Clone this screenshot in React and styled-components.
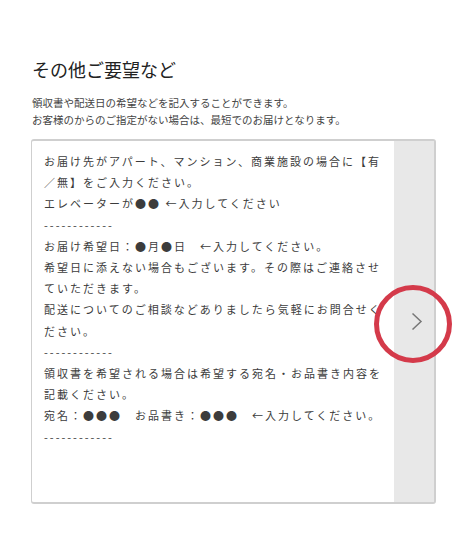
import React from "react";
import styled, { createGlobalStyle } from "styled-components";

const GlobalStyle = createGlobalStyle`
  body {
    margin: 0;
    background: #fff;
    font-family: "Noto Sans CJK JP", "Noto Sans", sans-serif;
  }
`;

const Page = styled.div`
  width: 466px;
  height: 560px;
  box-sizing: border-box;
  padding: 56px 30px 0 31px;
`;

const Title = styled.h2`
  margin: 0 0 0 1px;
  font-size: 18px;
  line-height: 26px;
  font-weight: 400;
  color: #222;
`;

const Lead = styled.p`
  margin: 12px 0 0 1px;
  font-size: 10.5px;
  line-height: 17px;
  color: #444;
`;

const Field = styled.div`
  position: relative;
  margin-top: 11px;
  height: 365px;
  box-sizing: border-box;
  display: flex;
  border: 1px solid #cfcfcf;
  border-top-width: 2px;
  border-right-width: 2px;
  border-bottom-width: 2px;
  border-radius: 3px;
  background: #fff;
`;

const Body = styled.div`
  flex: 1;
  padding: 10px 6px 0 12px;
  font-size: 11px;
  line-height: 21.2px;
  letter-spacing: 2px;
  color: #3c3c3c;
  white-space: pre-wrap;
  word-break: break-all;
`;

const Strip = styled.div`
  position: relative;
  width: 40px;
  background: #e8e8e8;
  display: flex;
  align-items: center;
  justify-content: center;
  padding-left: 6px;
  box-sizing: border-box;
`;

const Ring = styled.div`
  position: absolute;
  left: 50%;
  top: 50%;
  width: 78px;
  height: 78px;
  margin: -37px 0 0 -40px;
  box-sizing: border-box;
  border: 5px solid #d43a4a;
  border-radius: 50%;
`;

const Chevron = () => (
  <svg width="12" height="19" viewBox="0 0 12 19" fill="none">
    <path d="M1.5 1.5 L10 9.5 L1.5 17.5" stroke="#777" strokeWidth="1.5" />
  </svg>
);

const note = [
  "お届け先がアパート、マンション、商業施設の場合に【有／無】をご入力ください。",
  "エレベーターが●● ←入力してください",
  "------------",
  "お届け希望日：●月●日　←入力してください。",
  "希望日に添えない場合もございます。その際はご連絡させていただきます。",
  "配送についてのご相談などありましたら気軽にお問合せください。",
  "------------",
  "領収書を希望される場合は希望する宛名・お品書き内容を記載ください。",
  "宛名：●●●　お品書き：●●●　←入力してください。",
  "------------",
].join("\n");

export default function App() {
  return (
    <>
      <GlobalStyle />
      <Page>
        <Title>その他ご要望など</Title>
        <Lead>
          領収書や配送日の希望などを記入することができます。
          <br />
          お客様のからのご指定がない場合は、最短でのお届けとなります。
        </Lead>
        <Field>
          <Body>{note}</Body>
          <Strip>
            <Chevron />
            <Ring />
          </Strip>
        </Field>
      </Page>
    </>
  );
}
